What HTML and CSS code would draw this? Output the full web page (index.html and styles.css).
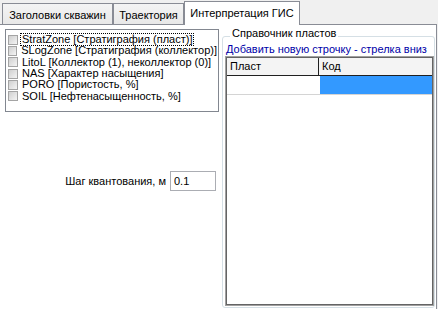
FILE: index.html
```html
<html lang="ru">
<head>
	<meta charset="UTF-8">
	<title>Интерпретация ГИС</title>
	<link rel="stylesheet" href="styles.css">
</head>
<body>
	<div class="tabs">
		<div class="tab tab-wells">Заголовки скважин</div>
		<div class="tab tab-traj">Траектория</div>
		<div class="tab tab-gis active">Интерпретация ГИС</div>
	</div>
	<div class="page">
		<div class="col-left">
			<div class="checklist">
				<div class="item focus"><span class="check"></span><span class="text">StratZone [Стратиграфия (пласт)]</span></div>
				<div class="item"><span class="check"></span><span class="text">SLogZone [Стратиграфия (коллектор)]</span></div>
				<div class="item"><span class="check"></span><span class="text">LitoL [Коллектор (1), неколлектор (0)]</span></div>
				<div class="item"><span class="check"></span><span class="text">NAS [Характер насыщения]</span></div>
				<div class="item"><span class="check"></span><span class="text">PORO [Пористость, %]</span></div>
				<div class="item"><span class="check"></span><span class="text">SOIL [Нефтенасыщенность, %]</span></div>
			</div>
			<div class="field">
				<label>Шаг квантования, м</label>
				<input type="text" value="0.1">
			</div>
		</div>
		<div class="col-right">
			<fieldset class="group">
				<legend>Справочник пластов</legend>
				<a class="hint">Добавить новую строчку - стрелка вниз</a>
				<div class="grid">
					<div class="grid-row head">
						<div class="cell c1">Пласт</div>
						<div class="cell c2">Код</div>
					</div>
					<div class="grid-row">
						<div class="cell c1"></div>
						<div class="cell c2 selected"></div>
					</div>
				</div>
			</fieldset>
		</div>
	</div>
</body>
</html>
```

FILE: styles.css
```css
* {
	margin: 0;
	padding: 0;
	box-sizing: border-box;
}

body {
	width: 438px;
	height: 309px;
	overflow: hidden;
	background: #f0f0f0;
	font: 11px "Liberation Sans", "Noto Sans CJK SC", sans-serif;
	color: #000;
}

/* вкладки */
.tabs {
	display: flex;
	align-items: flex-end;
	height: 24px;
	padding-left: 2px;
	position: relative;
	z-index: 1;
}

.tab {
	height: 21px;
	border: 1px solid #898c95;
	border-bottom: none;
	background: linear-gradient(#f4f4f4, #e8e8e8);
	display: flex;
	align-items: center;
	justify-content: center;
	padding-top: 1px;
}

.tab-wells {
	width: 111px;
}

.tab-traj {
	width: 71px;
}

.tab.active {
	width: 116px;
	height: 24px;
	margin-bottom: -1px;
	background: #fff;
	padding-top: 0;
	padding-bottom: 2px;
}

.page {
	display: flex;
	width: 437px;
	height: 285px;
	background: #fff;
	border-top: 1px solid #898c95;
	border-right: 1px solid #898c95;
}

.col-left {
	width: 222px;
	padding: 4px 0 0 5px;
}

.checklist {
	width: 214px;
	height: 83px;
	border: 1px solid #828790;
	padding: 4px 0 0 2px;
}

.item {
	display: flex;
	align-items: center;
	height: 11.3px;
	white-space: nowrap;
}

.check {
	width: 10px;
	height: 10px;
	margin-right: 3px;
	border: 1px solid #a4a4a4;
	background: linear-gradient(135deg, #cfcfcf, #f4f4f4);
}

.text {
	padding: 0 1px;
	line-height: 11px;
}

.focus .text {
	outline: 1px dotted #000;
}

.field {
	display: flex;
	align-items: center;
	justify-content: flex-end;
	margin: 59px 6px 0 0;
}

.field label {
	margin-right: 4px;
}

.field input {
	width: 46px;
	height: 20px;
	border: 1px solid #abadb3;
	font: 11px "Liberation Sans", sans-serif;
	padding: 0 3px;
	outline: none;
}

/* справочник */
.col-right {
	padding-top: 2px;
}

.group {
	width: 213px;
	height: 281px;
	border: 1px solid #d5dfe5;
	border-radius: 3px;
	padding: 0 0 0 2px;
}

.group legend {
	margin-left: 5px;
	padding: 0 2px 6px;
	line-height: 12px;
}

.hint {
	display: block;
	color: #0000a8;
	margin: -2px 0 0 1px;
	line-height: 13px;
}

.grid {
	width: 209px;
	height: 250px;
	border: 1px solid #a0a0a0;
	box-shadow: inset 1px 1px 0 #646464, inset -1px -1px 0 #646464;
	padding: 1px;
}

.grid-row {
	display: flex;
	height: 19px;
	border-bottom: 1px solid #d4d4d4;
}

.grid-row.head {
	height: 18px;
	background: #f4f4f4;
	border-bottom: 1px solid #202020;
}

.cell {
	line-height: 17px;
	padding-left: 3px;
}

.c1 {
	width: 92px;
}

.head .c1 {
	border-right: 1px solid #202020;
}

.c2 {
	flex: 1;
}

.selected {
	background: #3399ff;
	margin-left: 1px;
}
```
